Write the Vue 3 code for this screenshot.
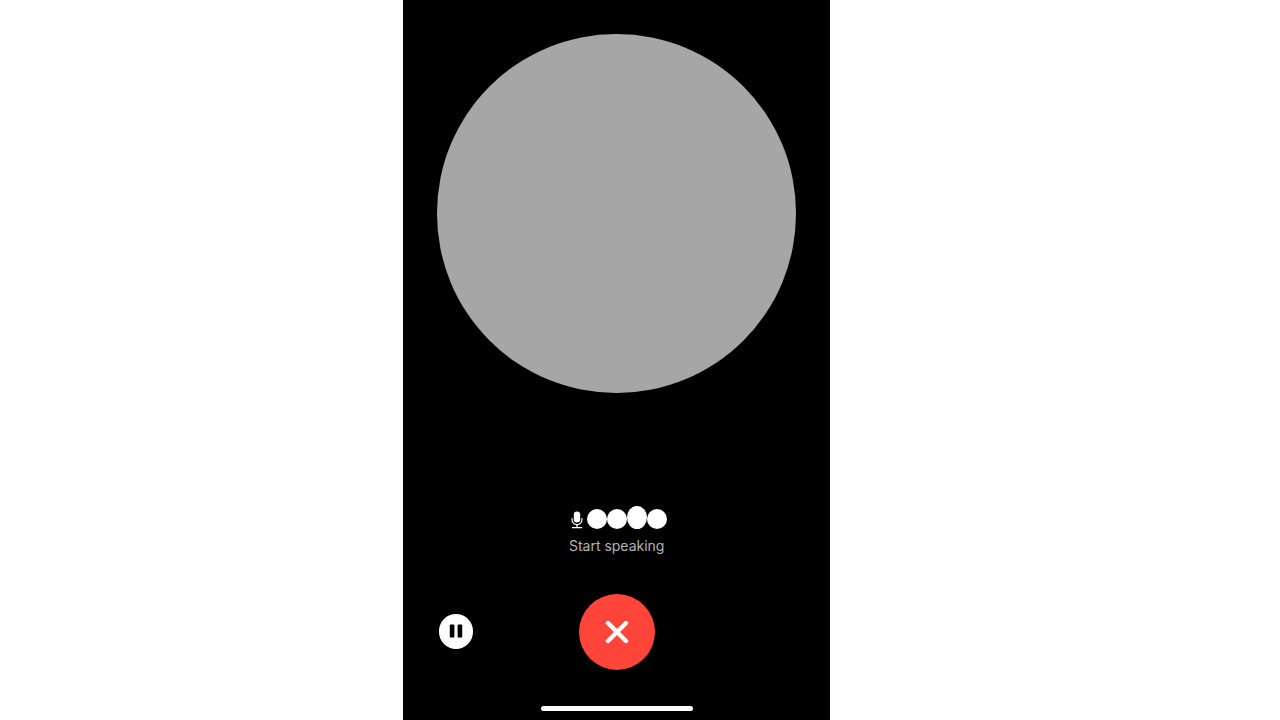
<script setup>
const dots = [
  { id: 1, h: 20 },
  { id: 2, h: 20 },
  { id: 3, h: 23 },
  { id: 4, h: 20 },
];
</script>

<template>
  <div class="page">
    <main class="phone">
      <div class="orb"></div>
      <div class="status">
        <div class="meter">
          <svg class="mic" width="14" height="18" viewBox="0 0 14 18" aria-hidden="true">
            <rect x="3.8" y="0.4" width="6.4" height="11" rx="3.2" fill="#fff" />
            <path d="M2 7.6v1a5 5 0 0 0 10 0v-1" fill="none" stroke="#fff" stroke-width="1.2" stroke-linecap="round" />
            <path d="M7 13.6v2.6M2.4 16.7h9.2" fill="none" stroke="#fff" stroke-width="1.3" stroke-linecap="round" />
          </svg>
          <span
            v-for="d in dots"
            :key="d.id"
            class="dot"
            :style="{ height: d.h + 'px' }"
          ></span>
        </div>
        <p class="label">Start speaking</p>
      </div>
      <div class="controls">
        <button class="pause" aria-label="Pause">
          <svg width="14" height="14" viewBox="0 0 14 14" aria-hidden="true">
            <rect x="0.8" y="0.4" width="4.6" height="13.2" rx="1.2" fill="#000" />
            <rect x="8.6" y="0.4" width="4.6" height="13.2" rx="1.2" fill="#000" />
          </svg>
        </button>
        <button class="end" aria-label="End">
          <svg width="24" height="24" viewBox="0 0 24 24" aria-hidden="true">
            <path d="M3 3l18 18M21 3L3 21" fill="none" stroke="#fff" stroke-width="4.4" stroke-linecap="round" />
          </svg>
        </button>
      </div>
      <div class="home"></div>
    </main>
  </div>
</template>

<style scoped>
.page {
  width: 1280px;
  height: 720px;
  padding-left: 403.4px;
  box-sizing: border-box;
  display: flex;
  background: #fff;
  overflow: hidden;
}
.phone {
  width: 426.6px;
  height: 720px;
  background: #000;
  display: flex;
  flex-direction: column;
  align-items: center;
  box-sizing: border-box;
  padding-top: 34.3px;
}
.orb {
  width: 358.4px;
  height: 358.4px;
  border-radius: 50%;
  background: #a6a6a6;
  flex: none;
}
.status {
  margin-top: 113.3px;
  display: flex;
  flex-direction: column;
  align-items: center;
}
.meter {
  height: 23px;
  padding-left: 4px;
  display: flex;
  align-items: flex-end;
  justify-content: center;
}
.mic {
  margin-right: 3px;
}
.dot {
  display: block;
  width: 20px;
  background: #fff;
  border-radius: 50%;
  flex: none;
}
.label {
  margin: 8px 0 0;
  font: 14px/18px Inter, "Liberation Sans", Arial, sans-serif;
  color: #b4b4b4;
}
.controls {
  position: relative;
  margin-top: 39px;
  width: 100%;
  display: flex;
  justify-content: center;
}
.end {
  width: 76px;
  height: 76px;
  border: 0;
  padding: 0;
  border-radius: 50%;
  background: #ff453a;
  display: flex;
  align-items: center;
  justify-content: center;
}
.pause {
  position: absolute;
  left: 35.4px;
  top: 20px;
  width: 34.6px;
  height: 35px;
  border: 0;
  padding: 0;
  border-radius: 50%;
  background: #fff;
  display: flex;
  align-items: center;
  justify-content: center;
}
.home {
  margin-top: 36px;
  width: 152px;
  height: 5px;
  border-radius: 3px;
  background: #fff;
  flex: none;
}
</style>
